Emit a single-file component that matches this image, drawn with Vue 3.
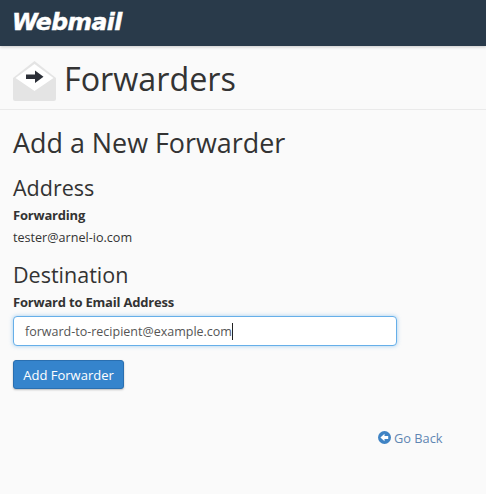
<template>
  <div class="page">
    <header class="topbar"><span class="logo">Webmail</span></header>
    <div class="title-row">
      <svg class="mail-icon" width="43" height="40" viewBox="0 0 43 40" aria-hidden="true">
        <path d="M0 17 L21.5 0 L43 17 L43 38 Q43 40 41 40 L2 40 Q0 40 0 38 Z" fill="#e4e4e4"/>
        <path d="M2.5 17 L21.5 3 L40.5 17 L21.5 30 Z" fill="#ffffff"/>
        <path d="M13 13.6 H22 V9.5 L30.5 15.8 L22 22 V18 H13 Z" fill="#2c3038"/>
      </svg>
      <h1>Forwarders</h1>
    </div>
    <main class="content">
      <h2>Add a New Forwarder</h2>
      <h3 class="address">Address</h3>
      <div class="label">Forwarding</div>
      <div class="value">tester@arnel-io.com</div>
      <h3 class="destination">Destination</h3>
      <div class="label">Forward to Email Address</div>
      <div class="input"><span>forward-to-recipient@example.com</span><i class="caret"></i></div>
      <button class="btn">Add Forwarder</button>
      <div class="back-row">
        <a class="back">
          <svg width="13" height="13" viewBox="0 0 14 14" aria-hidden="true">
            <circle cx="7" cy="7" r="7" fill="#3f83c4"/>
            <path d="M2.6 7 L7 3 V5.5 H11 V8.5 H7 V11 Z" fill="#fff"/>
          </svg>
          Go Back
        </a>
      </div>
    </main>
  </div>
</template>

<script setup>
</script>

<style>
html, body { margin: 0; background: #fafafa; }
</style>

<style scoped>
.page {
  height: 494px;
  overflow: hidden;
  background: #fafafa;
  color: #333;
  font-family: "Open Sans", sans-serif;
}
.topbar {
  height: 46px;
  background: #293a4a;
  box-shadow: 0 1px 3px rgba(0,0,0,.2);
  display: flex;
  align-items: center;
  padding-left: 12px;
  box-sizing: border-box;
}
.logo {
  color: #fff;
  font: italic 700 23.5px/1 "DejaVu Sans", sans-serif;
  letter-spacing: -0.55px;
  -webkit-text-stroke: 0.5px #fff;
}
.title-row {
  height: 64px;
  border-bottom: 1px solid #eaeaea;
  display: flex;
  align-items: flex-start;
  padding: 15px 0 0 13px;
  box-sizing: border-box;
  gap: 8px;
}
.mail-icon { flex: none; }
h1 {
  margin: -1px 0 0;
  font-size: 32.3px;
  line-height: 36px;
  font-weight: 400;
  color: #333;
}
.content { padding: 0 13px; }
h2 {
  margin: 17px 0 0;
  font-size: 26.9px;
  line-height: 32px;
  font-weight: 400;
}
h3 {
  margin: 0;
  font-size: 21.5px;
  line-height: 28px;
  font-weight: 400;
}
.address { margin-top: 15px; }
.destination { margin-top: 13px; }
.label {
  margin-top: 3px;
  font-size: 13px;
  line-height: 20px;
  font-weight: 700;
  letter-spacing: -0.2px;
}
.value {
  margin-top: 3px;
  font-size: 12.6px;
  line-height: 20px;
}
.input {
  margin-top: 4px;
  width: 384px;
  height: 30px;
  box-sizing: border-box;
  background: #fff;
  border: 1px solid #66afe9;
  border-radius: 4px;
  box-shadow: 0 0 4px rgba(102,175,233,.6);
  display: flex;
  align-items: center;
  padding-left: 11px;
  font-size: 12.5px;
  color: #555;
}
.caret { width: 1px; height: 17px; background: #222; }
.btn {
  display: block;
  margin-top: 14px;
  width: 111px;
  height: 29px;
  padding: 0;
  background: #3584cc;
  border: 1px solid #2a6fb0;
  border-radius: 3px;
  box-shadow: 0 1px 2px rgba(0,0,0,.25);
  color: #fff;
  font-family: inherit;
  font-size: 13px;
}
.back-row {
  margin-top: 38px;
  padding-left: 365px;
}
.back {
  display: inline-flex;
  align-items: center;
  gap: 3px;
  font-size: 12.8px;
  line-height: 20px;
  color: #5f86b3;
}
</style>
